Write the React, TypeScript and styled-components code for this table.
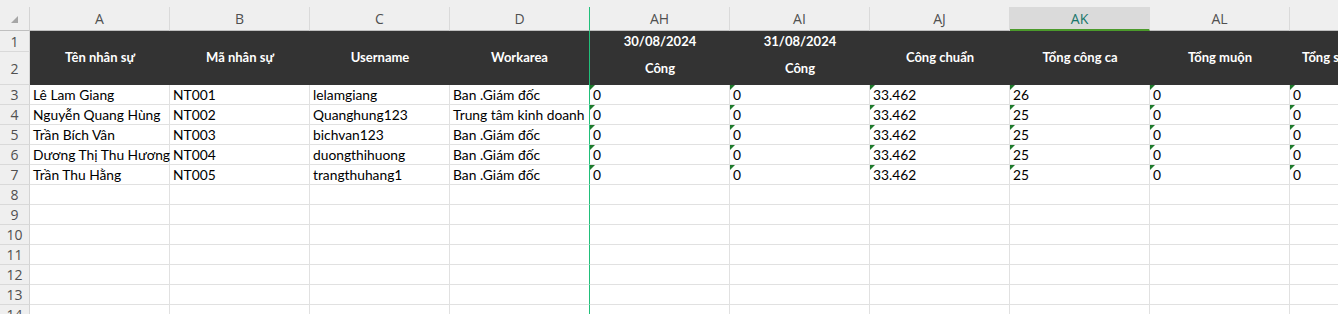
import React from "react";
import styled, { createGlobalStyle, css } from "styled-components";

const GlobalStyle = createGlobalStyle`
  html, body {
    margin: 0;
    padding: 0;
    background: #ffffff;
    overflow: hidden;
  }
`;

const CELL_FONT = `"Lato", "Liberation Sans", sans-serif`;
const UI_FONT = `"Open Sans", "Noto Sans", sans-serif`;
const GRID = "#e1e1e1";
const FREEZE = "#21bf7a";

const Workbook = styled.div`
  width: 1338px;
  height: 314px;
  overflow: hidden;
  background: #efefef;
`;

const TopBand = styled.div`
  height: 7px;
  background: #efefef;
`;

const Sheet = styled.div`
  display: grid;
  grid-template-columns: 30px repeat(10, 140px);
  grid-template-rows: 24px 21px 33px;
  grid-auto-rows: 20px;
  background: #ffffff;
`;

const frozenEdge = css<{ $frozen?: boolean }>`
  ${(p) => p.$frozen && `border-right: 1px solid ${FREEZE};`}
`;

const Corner = styled.div`
  position: relative;
  background: #efefef;
  border-right: 1px solid #d4d4d4;
  border-bottom: 1px solid #bfbfbf;
  box-sizing: border-box;

  &::after {
    content: "";
    position: absolute;
    left: 11px;
    top: 9px;
    width: 0;
    height: 0;
    border-left: 7px solid transparent;
    border-bottom: 7px solid #a6a6a6;
  }
`;

const ColHead = styled.div<{ $active?: boolean; $frozen?: boolean }>`
  box-sizing: border-box;
  display: flex;
  align-items: center;
  justify-content: center;
  padding-bottom: 1px;
  font-family: ${UI_FONT};
  font-size: 14px;
  color: #505050;
  background: #efefef;
  border-right: 1px solid #dadada;
  border-bottom: 1px solid #bfbfbf;
  ${(p) =>
    p.$active &&
    css`
      background: #dadada;
      color: #17766a;
      border-bottom: 2px solid #4b9a2b;
      padding-bottom: 0;
    `}
  ${frozenEdge}
`;

const RowHead = styled.div`
  box-sizing: border-box;
  display: flex;
  align-items: center;
  justify-content: center;
  font-family: ${UI_FONT};
  font-size: 14px;
  color: #505050;
  background: #efefef;
  border-right: 1px solid #d4d4d4;
  border-bottom: 1px solid #d9d9d9;
`;

const RowHeadPair = styled.div`
  grid-row: span 2;
  display: grid;
  grid-template-rows: 21px 33px;
`;

const TitleCell = styled.div<{ $frozen?: boolean }>`
  box-sizing: border-box;
  grid-row: span 2;
  display: flex;
  align-items: center;
  justify-content: center;
  background: #333333;
  color: #ffffff;
  font-family: ${CELL_FONT};
  font-weight: 700;
  font-size: 13px;
  white-space: nowrap;
  overflow: hidden;
  padding-bottom: 3px;
  ${frozenEdge}
`;

// last visible column is cut by the window edge, so pin its title to the left
const OverflowTitle = styled(TitleCell)`
  justify-content: flex-start;
  padding-left: 12px;
`;

const DateCell = styled.div`
  grid-row: span 2;
  display: grid;
  grid-template-rows: 21px 33px;
  background: #333333;
`;

const DateLine = styled.div`
  display: flex;
  align-items: center;
  justify-content: center;
  color: #ffffff;
  font-family: ${CELL_FONT};
  font-weight: 700;
  font-size: 13px;
  padding-bottom: 2px;
`;

const Cell = styled.div<{ $mark?: boolean; $frozen?: boolean }>`
  position: relative;
  box-sizing: border-box;
  padding: 0 3px;
  line-height: 20px;
  font-family: ${CELL_FONT};
  font-size: 13.8px;
  color: #000000;
  white-space: nowrap;
  overflow: visible;
  border-right: 1px solid ${GRID};
  border-bottom: 1px solid ${GRID};
  ${(p) =>
    p.$mark &&
    css`
      &::before {
        content: "";
        position: absolute;
        left: 0;
        top: 0;
        width: 0;
        height: 0;
        border-top: 5px solid #1f7a2c;
        border-right: 5px solid transparent;
      }
    `}
  ${frozenEdge}
`;

type Staff = {
  name: string;
  code: string;
  user: string;
  area: string;
  ah: string;
  ai: string;
  standard: string;
  shifts: string;
  late: string;
  early: string;
};

const staff: Staff[] = [
  { name: "Lê Lam Giang", code: "NT001", user: "lelamgiang", area: "Ban .Giám đốc", ah: "0", ai: "0", standard: "33.462", shifts: "26", late: "0", early: "0" },
  { name: "Nguyễn Quang Hùng", code: "NT002", user: "Quanghung123", area: "Trung tâm kinh doanh", ah: "0", ai: "0", standard: "33.462", shifts: "25", late: "0", early: "0" },
  { name: "Trần Bích Vân", code: "NT003", user: "bichvan123", area: "Ban .Giám đốc", ah: "0", ai: "0", standard: "33.462", shifts: "25", late: "0", early: "0" },
  { name: "Dương Thị Thu Hương", code: "NT004", user: "duongthihuong", area: "Ban .Giám đốc", ah: "0", ai: "0", standard: "33.462", shifts: "25", late: "0", early: "0" },
  { name: "Trần Thu Hằng", code: "NT005", user: "trangthuhang1", area: "Ban .Giám đốc", ah: "0", ai: "0", standard: "33.462", shifts: "25", late: "0", early: "0" },
];

const columns = ["A", "B", "C", "D", "AH", "AI", "AJ", "AK", "AL", ""];
const FROZEN_COL = 3;
const ACTIVE_COL = 7;
const EMPTY_ROWS = [8, 9, 10, 11, 12, 13, 14];

const App: React.FC = () => (
  <Workbook>
    <GlobalStyle />
    <TopBand />
    <Sheet>
      <Corner />
      {columns.map((label, i) => (
        <ColHead key={`col-${i}`} $active={i === ACTIVE_COL} $frozen={i === FROZEN_COL}>
          {label}
        </ColHead>
      ))}

      <RowHeadPair>
        <RowHead>1</RowHead>
        <RowHead>2</RowHead>
      </RowHeadPair>
      <TitleCell>Tên nhân sự</TitleCell>
      <TitleCell>Mã nhân sự</TitleCell>
      <TitleCell>Username</TitleCell>
      <TitleCell $frozen>Workarea</TitleCell>
      <DateCell>
        <DateLine>30/08/2024</DateLine>
        <DateLine>Công</DateLine>
      </DateCell>
      <DateCell>
        <DateLine>31/08/2024</DateLine>
        <DateLine>Công</DateLine>
      </DateCell>
      <TitleCell>Công chuẩn</TitleCell>
      <TitleCell>Tổng công ca</TitleCell>
      <TitleCell>Tổng muộn</TitleCell>
      <OverflowTitle>Tổng số lần muộn</OverflowTitle>

      {staff.map((s, r) => (
        <React.Fragment key={s.code}>
          <RowHead>{r + 3}</RowHead>
          <Cell>{s.name}</Cell>
          <Cell>{s.code}</Cell>
          <Cell>{s.user}</Cell>
          <Cell $frozen>{s.area}</Cell>
          <Cell $mark>{s.ah}</Cell>
          <Cell $mark>{s.ai}</Cell>
          <Cell $mark>{s.standard}</Cell>
          <Cell $mark>{s.shifts}</Cell>
          <Cell $mark>{s.late}</Cell>
          <Cell $mark>{s.early}</Cell>
        </React.Fragment>
      ))}

      {EMPTY_ROWS.map((n) => (
        <React.Fragment key={`row-${n}`}>
          <RowHead>{n}</RowHead>
          {columns.map((_, i) => (
            <Cell key={i} $frozen={i === FROZEN_COL} />
          ))}
        </React.Fragment>
      ))}
    </Sheet>
  </Workbook>
);

export default App;
